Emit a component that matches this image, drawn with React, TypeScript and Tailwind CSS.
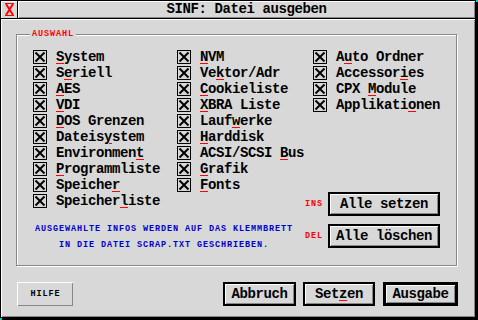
const sys = "font-['Liberation_Mono',monospace] font-bold text-[14px] tracking-[-0.4px] leading-[16px] text-black";
const small = "font-['Liberation_Mono',monospace] font-bold text-[8.5px] tracking-[0.9px] leading-[16px]";

const col1: [string, number][] = [
  ["System", 0],
  ["Seriell", 1],
  ["AES", 0],
  ["VDI", 0],
  ["DOS Grenzen", 0],
  ["Dateisystem", 6],
  ["Environment", 10],
  ["Programmliste", 0],
  ["Speicher", 7],
  ["Speicherliste", 8],
];

const col2: [string, number][] = [
  ["NVM", 0],
  ["Vektor/Adr", 2],
  ["Cookieliste", 0],
  ["XBRA Liste", 0],
  ["Laufwerke", 4],
  ["Harddisk", 0],
  ["ACSI/SCSI Bus", 10],
  ["Grafik", 0],
  ["Fonts", 0],
];

const col3: [string, number][] = [
  ["Auto Ordner", 1],
  ["Accessories", 8],
  ["CPX Module", 4],
  ["Applikationen", 9],
];

const Label = ({ text, u }: { text: string; u: number }) => (
  <span className="whitespace-pre">
    {text.slice(0, u)}
    <span className="underline decoration-[#ff0000] decoration-1 underline-offset-[2px]">
      {text[u]}
    </span>
    {text.slice(u + 1)}
  </span>
);

const Check = () => (
  <svg width="14" height="14" viewBox="0 0 14 14" className="shrink-0">
    <rect x="0.5" y="0.5" width="13" height="13" fill="none" stroke="#000" />
    <path d="M2.5 2.5 L11.5 11.5 M11.5 2.5 L2.5 11.5" stroke="#000" strokeWidth="2" />
  </svg>
);

const Column = ({ items, w }: { items: [string, number][]; w: string }) => (
  <div className={`flex flex-col ${w}`}>
    {items.map(([t, u]) => (
      <div key={t} className="flex items-center gap-[9px] h-[16px]">
        <Check />
        <span className={sys}>
          <Label text={t} u={u} />
        </span>
      </div>
    ))}
  </div>
);

const Button = ({ children, className }: { children: React.ReactNode; className: string }) => (
  <div
    className={`flex items-center justify-center h-[24px] border-black bg-[#d8d8d8] shadow-[inset_1px_1px_0_#fff,inset_-1px_-1px_0_#888] ${sys} ${className}`}
  >
    {children}
  </div>
);

export default function App() {
  return (
    <div className="w-[478px] h-[320px] bg-[#00d0d0]">
      <div className="w-[476px] h-[318px] border border-black bg-[#d8d8d8] shadow-[2px_2px_0_#000] flex flex-col">
        {/* title bar */}
        <div className="flex h-[18px] border-b border-black shrink-0">
          <div className="w-[17px] border-r border-black flex items-center justify-center shadow-[inset_1px_1px_0_#fff]">
            <svg width="9" height="13" viewBox="0 0 9 13">
              <path d="M0 0.5 H9 M0 12.5 H9" stroke="#ff0000" />
              <path d="M1 1 L8 12 M8 1 L1 12" stroke="#ff0000" strokeWidth="2" />
            </svg>
          </div>
          <div className={`flex-1 flex items-center justify-center shadow-[inset_1px_1px_0_#fff,inset_-1px_-1px_0_#888] ${sys} leading-[17px]`}>
            SINF: Datei ausgeben
          </div>
        </div>

        {/* body */}
        <div className="flex-1 flex flex-col shadow-[inset_1px_1px_0_#fff,inset_-1px_-1px_0_#888]">
          <div className="relative mt-[15px] ml-[15px] w-[441px] h-[232px] border border-[#888] shadow-[inset_1px_1px_0_#fff,1px_1px_0_#fff]">
            <span className={`absolute left-[13px] top-[-9px] px-[2px] bg-[#d8d8d8] text-[#ff0000] ${small}`}>
              AUSWAHL
            </span>
            <div className="flex pt-[14px] pl-[16px]">
              <div className="flex flex-col w-[272px]">
                <div className="flex">
                  <Column items={col1} w="w-[144px]" />
                  <Column items={col2} w="w-[128px]" />
                </div>
                <div className={`mt-[12px] ml-[2px] w-fit text-center text-[#0000d0] ${small}`}>
                  <div>AUSGEWAHLTE INFOS WERDEN AUF DAS KLEMMBRETT</div>
                  <div>IN DIE DATEI SCRAP.TXT GESCHRIEBEN.</div>
                </div>
              </div>
              <div className="flex flex-col">
                <div className="ml-[8px]">
                  <Column items={col3} w="w-[130px]" />
                </div>
                <div className="mt-[79px] flex items-center">
                  <span className={`w-[23px] text-[#ff0000] ${small}`}>INS</span>
                  <Button className="w-[112px] border-2">Alle setzen</Button>
                </div>
                <div className="mt-[8px] flex items-center">
                  <span className={`w-[23px] text-[#ff0000] ${small}`}>DEL</span>
                  <Button className="w-[112px] border-2">Alle löschen</Button>
                </div>
              </div>
            </div>
          </div>

          {/* bottom buttons */}
          <div className="flex mt-[16px] ml-[16px]">
            <div className={`w-[56px] h-[24px] flex items-center justify-center shadow-[inset_1px_1px_0_#fff,inset_-1px_-1px_0_#888] text-black ${small} pl-[1px]`}>
              HILFE
            </div>
            <Button className="ml-[150px] w-[73px] border-2">Abbruch</Button>
            <Button className="ml-[7px] w-[72px] border-2">
              <Label text="Setzen" u={3} />
            </Button>
            <Button className="ml-[8px] w-[75px] border-[3px]">Ausgabe</Button>
          </div>
        </div>
      </div>
    </div>
  );
}
